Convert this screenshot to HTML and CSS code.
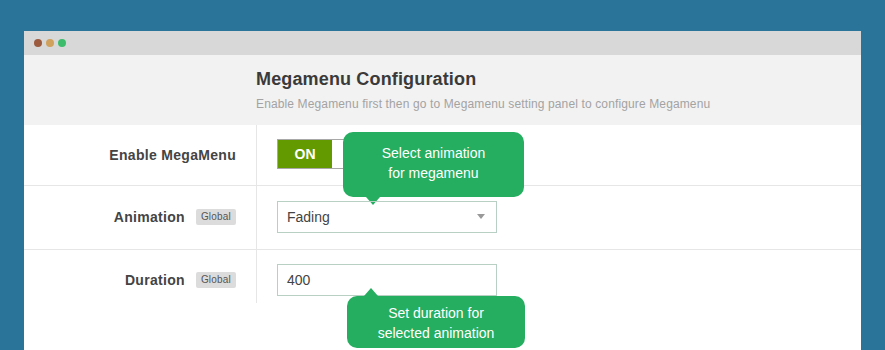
FILE: index.html
```html
<!DOCTYPE html>
<html>
    <head>
        <meta charset="UTF-8">
        <title>Megamenu Configuration</title>
        <link rel="stylesheet" href="styles.css">
    </head>
    <body>
        <div class="window">
            <div class="titlebar">
                <span class="dot dot--red"></span>
                <span class="dot dot--yellow"></span>
                <span class="dot dot--green"></span>
            </div>
            <div class="header">
                <h1>Megamenu Configuration</h1>
                <p>Enable Megamenu first then go to Megamenu setting panel to configure Megamenu</p>
            </div>
            <div class="row row--enable">
                <div class="label">Enable MegaMenu</div>
                <div class="control">
                    <div class="toggle">
                        <span class="toggle-on">ON</span>
                        <span class="toggle-off"></span>
                    </div>
                    <div class="tip tip--down">Select animation<br>for megamenu</div>
                </div>
            </div>
            <div class="row row--animation">
                <div class="label">Animation <span class="badge">Global</span></div>
                <div class="control">
                    <div class="select">Fading<span class="caret"></span></div>
                </div>
            </div>
            <div class="row row--duration">
                <div class="label">Duration <span class="badge">Global</span></div>
                <div class="control">
                    <div class="input">400</div>
                    <div class="tip tip--up">Set duration for<br>selected animation</div>
                </div>
            </div>
            <div class="spacer"></div>
        </div>
    </body>
</html>
```

FILE: styles.css
```css
body {
    font-family: "Liberation Sans", Arial, sans-serif;
    margin: 0;
    padding: 0;
    background: #2a7399;
    color: #333;
    overflow: hidden;
}
.window {
    margin: 31px 0 0 24px;
    width: 837px;
    background: #fff;
}
.titlebar {
    height: 24px;
    background: #d8d8d8;
    display: flex;
    align-items: center;
    gap: 4px;
    padding-left: 10px;
}
.dot {
    width: 8px;
    height: 8px;
    border-radius: 50%;
}
.dot--red {
    background: #9c5a3e;
}
.dot--yellow {
    background: #d0a15c;
}
.dot--green {
    background: #3dbd6c;
}
.header {
    height: 70px;
    box-sizing: border-box;
    background: #f2f2f2;
    padding: 12px 0 0 232px;
}
.header h1 {
    margin: 0;
    font-size: 18px;
    line-height: 24px;
    font-weight: bold;
    color: #3a3a3a;
    letter-spacing: 0.15px;
}
.header p {
    margin: 5px 0 0;
    font-size: 12px;
    line-height: 16px;
    color: #a3a3a3;
    letter-spacing: 0.13px;
}
.row {
    display: grid;
    grid-template-columns: 232px 1fr;
}
.row--enable, .row--animation {
    border-bottom: 1px solid #e6e6e6;
}
.label {
    display: flex;
    align-items: center;
    justify-content: flex-end;
    gap: 11px;
    padding-right: 20px;
    font-size: 14px;
    font-weight: bold;
    color: #444;
    letter-spacing: 0.3px;
}
.control {
    position: relative;
    border-left: 1px solid #e6e6e6;
    padding-left: 20px;
}
.row--enable .control {
    height: 60px;
    padding-top: 14px;
    box-sizing: border-box;
}
.row--animation .control {
    height: 63px;
    padding-top: 15px;
    box-sizing: border-box;
}
.row--animation .label {
    padding-bottom: 2px;
}
.row--duration .control {
    height: 53px;
    padding-top: 14px;
    box-sizing: border-box;
}
.row--duration .label {
    padding-top: 6px;
}
.badge {
    background: #dcdcdc;
    color: #555;
    font-size: 10px;
    font-weight: normal;
    letter-spacing: 0.2px;
    padding: 2px 5px;
    border-radius: 2px;
    line-height: 12px;
}
.toggle {
    display: flex;
    width: 110px;
    height: 30px;
    border: 1px solid #a8a8a8;
    box-sizing: border-box;
}
.toggle-on {
    width: 54px;
    background: #639a00;
    color: #fff;
    font-size: 14px;
    font-weight: bold;
    display: flex;
    align-items: center;
    justify-content: center;
}
.toggle-off {
    flex: 1;
    background: #fff;
}
.select, .input {
    position: relative;
    width: 220px;
    height: 32px;
    box-sizing: border-box;
    border: 1px solid #b8d0c4;
    padding: 0 9px;
    font-size: 14px;
    line-height: 30px;
    color: #444;
}
.caret {
    position: absolute;
    right: 11px;
    top: 12px;
    border-left: 4px solid transparent;
    border-right: 4px solid transparent;
    border-top: 5px solid #999;
}
.tip {
    position: absolute;
    background: #25ad60;
    color: #fff;
    font-size: 14px;
    line-height: 20px;
    text-align: center;
    border-radius: 10px;
    box-sizing: border-box;
}
.tip::after {
    content: "";
    position: absolute;
    border-left: 7px solid transparent;
    border-right: 7px solid transparent;
}
.tip--down {
    left: 86px;
    top: 7px;
    width: 181px;
    height: 65px;
    padding-top: 11px;
}
.tip--down::after {
    left: 23px;
    bottom: -8px;
    border-top: 8px solid #25ad60;
}
.tip--up {
    left: 90px;
    top: 46px;
    width: 178px;
    height: 52px;
    padding-top: 7px;
}
.tip--up::after {
    left: 17px;
    top: -8px;
    border-bottom: 8px solid #25ad60;
}
.spacer {
    height: 47px;
    border-bottom: 1px solid #e6e6e6;
}
```
